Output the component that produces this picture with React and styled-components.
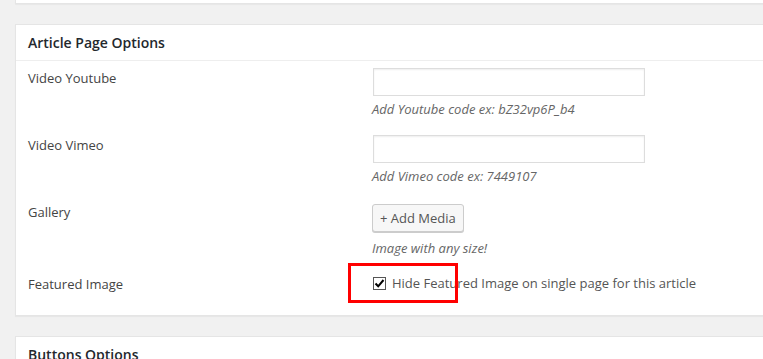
import React from 'react';
import styled, { createGlobalStyle } from 'styled-components';

const GlobalStyle = createGlobalStyle`
    body {
        margin: 0;
        background: #f1f1f1;
        font-family: "Open Sans", "Liberation Sans", sans-serif;
        color: #444;
    }
`;

const Page = styled.div`
    width: 763px;
    height: 359px;
    overflow: hidden;
    padding-left: 15px;
    box-sizing: border-box;
    display: flex;
    flex-direction: column;
    gap: 20px;
`;

const Panel = styled.div`
    width: 800px;
    flex-shrink: 0;
    background: #fff;
    border: 1px solid #e5e5e5;
    border-top: ${p => (p.cut ? 'none' : '1px solid #e5e5e5')};
    box-shadow: 0 1px 1px rgba(0, 0, 0, 0.04);
    height: ${p => (p.cut ? '3px' : 'auto')};
`;

const PanelHead = styled.h2`
    margin: 0;
    padding: 8px 12px;
    font-size: 14px;
    line-height: 19px;
    font-weight: 600;
    color: #23282d;
    border-bottom: 1px solid #eee;
`;

const PanelBody = styled.div`
    padding: 0 0 11px 12px;
`;

const Row = styled.div`
    display: grid;
    grid-template-columns: 344px 1fr;
    padding: 7px 0 10px;
`;

const Label = styled.div`
    font-size: 13px;
    line-height: 20px;
    color: #444;
`;

const Field = styled.div`
    display: flex;
    flex-direction: column;
    align-items: flex-start;
`;

const TextInput = styled.input`
    width: 272px;
    height: 28px;
    box-sizing: border-box;
    border: 1px solid #ddd;
    box-shadow: inset 0 1px 2px rgba(0, 0, 0, 0.07);
    background: #fff;
    margin: 0 0 0 1px;
    padding: 3px 5px;
    font: inherit;
`;

const Description = styled.p`
    margin: ${p => (p.gap || 4)}px 0 0;
    font-size: 13px;
    line-height: 18px;
    font-style: italic;
    color: #666;
`;

const MediaButton = styled.button`
    margin-top: 2px;
    height: 28px;
    padding: 0 7px;
    font-family: "Open Sans", "Liberation Sans", sans-serif;
    font-size: 13px;
    color: #555;
    background: #f7f7f7;
    border: 1px solid #ccc;
    border-radius: 3px;
    box-shadow: 0 1px 0 #ccc;
    cursor: pointer;
`;

const CheckLine = styled.label`
    position: relative;
    display: flex;
    align-items: center;
    gap: 6px;
    margin-left: 1px;
    font-size: 13px;
    line-height: 18px;
    color: #555;
`;

const Box = styled.span`
    width: 13px;
    height: 13px;
    box-sizing: border-box;
    border: 1px solid #555;
    background: #fff;
    display: flex;
    align-items: center;
    justify-content: center;
`;

const Highlight = styled.span`
    position: absolute;
    left: -25px;
    top: -11px;
    width: 110px;
    height: 40px;
    box-sizing: border-box;
    border: 3px solid #f00;
    pointer-events: none;
`;

const App = () => {
    return (
        <>
            <GlobalStyle />
            <Page>
                <Panel cut />

                <Panel>
                    <PanelHead>Article Page Options</PanelHead>
                    <PanelBody>
                        <Row>
                            <Label>Video Youtube</Label>
                            <Field>
                                <TextInput type="text" />
                                <Description>Add Youtube code ex: bZ32vp6P_b4</Description>
                            </Field>
                        </Row>
                        <Row>
                            <Label>Video Vimeo</Label>
                            <Field>
                                <TextInput type="text" />
                                <Description>Add Vimeo code ex: 7449107</Description>
                            </Field>
                        </Row>
                        <Row>
                            <Label>Gallery</Label>
                            <Field>
                                <MediaButton>+ Add Media</MediaButton>
                                <Description gap={7}>Image with any size!</Description>
                            </Field>
                        </Row>
                        <Row>
                            <Label>Featured Image</Label>
                            <Field>
                                <CheckLine>
                                    <Box>
                                        <svg width="11" height="11" viewBox="0 0 11 11">
                                            <path d="M1.5 5.5 L4.2 8.3 L9.5 2" fill="none" stroke="#000" strokeWidth="2" />
                                        </svg>
                                    </Box>
                                    Hide Featured Image on single page for this article
                                    <Highlight />
                                </CheckLine>
                            </Field>
                        </Row>
                    </PanelBody>
                </Panel>

                <Panel>
                    <PanelHead>Buttons Options</PanelHead>
                </Panel>
            </Page>
        </>
    );
};

export default App;
